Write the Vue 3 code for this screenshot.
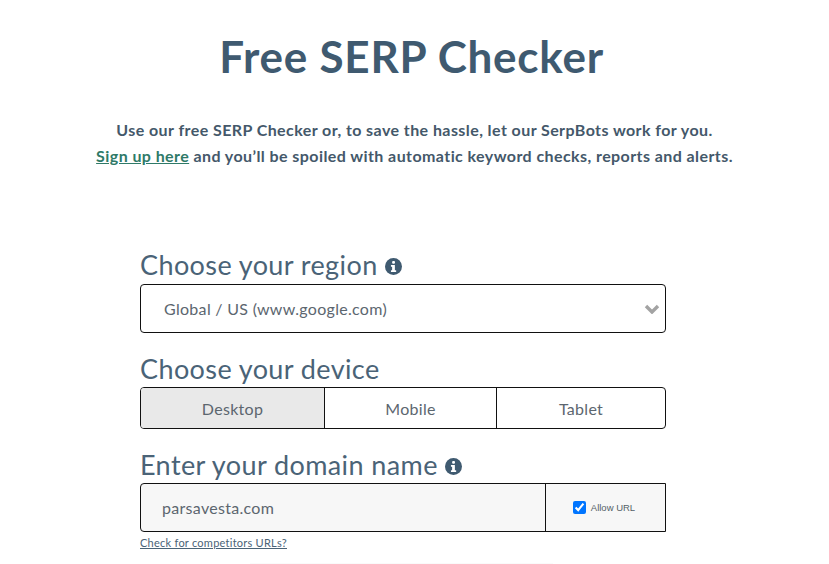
<script setup>
const devices = [
  { name: 'Desktop', active: true },
  { name: 'Mobile', active: false },
  { name: 'Tablet', active: false }
]
</script>

<template>
  <div class="page">
    <h1 class="title">Free SERP Checker</h1>
    <p class="intro">
      Use our free SERP Checker or, to save the hassle, let our SerpBots work for you.<br />
      <a class="signup">Sign up here</a> and you’ll be spoiled with automatic keyword checks, reports and alerts.
    </p>
    <form class="form">
      <label class="label">Choose your region
        <svg class="info" viewBox="0 0 16 16"><circle cx="8" cy="8" r="8" fill="#3f5a70"/><rect x="6.7" y="2.8" width="2.7" height="2.7" rx="1" fill="#fff"/><path d="M5.6 6.6h3.7v4.9h1.2v1.6H5.6v-1.6h1.1V8.2H5.6z" fill="#fff"/></svg>
      </label>
      <div class="select">
        <span>Global / US (www.google.com)</span>
        <svg class="chev" viewBox="0 0 16 10"><path d="M2 2l6 6 6-6" fill="none" stroke="#a3a3a3" stroke-width="3.4"/></svg>
      </div>
      <label class="label second">Choose your device</label>
      <div class="devices">
        <div v-for="d in devices" :key="d.name" class="device" :class="[d.name.toLowerCase(), { active: d.active }]">{{ d.name }}</div>
      </div>
      <label class="label third">Enter your domain name
        <svg class="info" viewBox="0 0 16 16"><circle cx="8" cy="8" r="8" fill="#3f5a70"/><rect x="6.7" y="2.8" width="2.7" height="2.7" rx="1" fill="#fff"/><path d="M5.6 6.6h3.7v4.9h1.2v1.6H5.6v-1.6h1.1V8.2H5.6z" fill="#fff"/></svg>
      </label>
      <div class="domain">
        <div class="domain-input">parsavesta.com</div>
        <div class="allow"><input type="checkbox" checked /><span>Allow URL</span></div>
      </div>
      <a class="competitors">Check for competitors URLs?</a>
    </form>
    <div class="next"></div>
  </div>
</template>

<style>
html, body { margin: 0; background: #fff; overflow: hidden; }
</style>

<style scoped>
.page { width: 829px; height: 564px; overflow: hidden; font-family: Lato, "Noto Sans", sans-serif; color: #3f5a70; box-sizing: border-box; padding-top: 30px; }
.title { margin: 0; text-align: center; font-size: 44px; line-height: 52px; font-weight: 700; letter-spacing: 0.75px; transform: translateX(-3px); }
.intro { margin: 35px 0 0; text-align: center; font-size: 16px; line-height: 26px; font-weight: 700; color: #44586a; letter-spacing: 0.42px; }
.signup { color: #2f7a68; text-decoration: underline; }
.form { width: 526px; margin: 80px 0 0 140px; }
.label { display: flex; align-items: center; gap: 7px; font-size: 27px; line-height: 32px; color: #4a6377; letter-spacing: 0.4px; }
.info { width: 17px; height: 17px; margin-top: 3px; }
.select { margin-top: 3px; height: 49px; box-sizing: border-box; border: 1px solid #111; border-radius: 4px; display: flex; align-items: center; justify-content: space-between; padding: 0 5px 0 23px; font-size: 16px; letter-spacing: 0.3px; color: #5c666f; }
.chev { width: 16px; height: 10px; }
.second { margin-top: 20px; }
.devices { margin-top: 2px; height: 42px; display: flex; border: 1px solid #111; border-radius: 4px; box-sizing: border-box; overflow: hidden; font-size: 16px; letter-spacing: 0.3px; color: #5c666f; }
.device { display: flex; align-items: center; justify-content: center; box-sizing: border-box; }
.desktop { width: 184px; border-right: 1px solid #111; }
.mobile { width: 172px; border-right: 1px solid #111; }
.tablet { flex: 1; }
.active { background: #e9e9e9; }
.third { margin-top: 20px; }
.domain { margin-top: 2px; height: 49px; display: flex; border: 1px solid #111; border-radius: 4px 0 0 4px; box-sizing: border-box; overflow: hidden; background: #f7f7f7; }
.domain-input { flex: 1; display: flex; align-items: center; padding-left: 21px; font-size: 16px; letter-spacing: 0.3px; color: #5c666f; }
.allow { width: 120px; border-left: 1px solid #111; display: flex; align-items: center; justify-content: center; gap: 5px; font-family: "Liberation Sans", sans-serif; font-size: 9.5px; color: #555f68; box-sizing: border-box; padding-right: 3px; }
.allow input { margin: 0; width: 13px; height: 13px; }
.competitors { display: block; margin-top: 4px; font-size: 11px; line-height: 14px; letter-spacing: 0.25px; text-decoration: underline; color: #4a6377; }
.next { width: 303px; height: 4px; margin: 13px 0 0 250px; background: #fafafa; }
</style>
